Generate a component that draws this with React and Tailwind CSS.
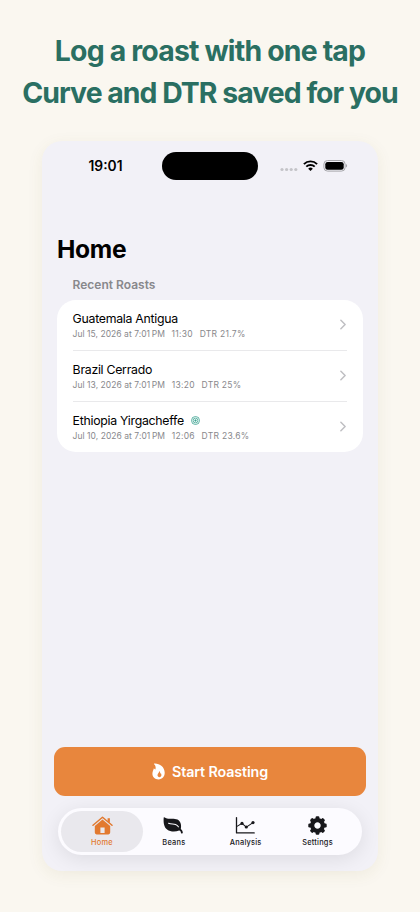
import React from 'react'

const roasts = [
  { name: 'Guatemala Antigua', date: 'Jul 15, 2026 at 7:01\u2009PM', time: '11:30', dtr: 'DTR 21.7%' },
  { name: 'Brazil Cerrado', date: 'Jul 13, 2026 at 7:01\u2009PM', time: '13:20', dtr: 'DTR 25%' },
  { name: 'Ethiopia Yirgacheffe', date: 'Jul 10, 2026 at 7:01\u2009PM', time: '12:06', dtr: 'DTR 23.6%', target: true },
]

const HomeIcon = () => (
  <svg width="21" height="19" viewBox="0 0 21 19" fill="none">
    <path d="M1 9.2 10.5 1.2 20 9.2" stroke="currentColor" strokeWidth="1.5" strokeLinecap="round" strokeLinejoin="round" />
    <path d="M15.6 2.2h2.3v4.9l-2.3-1.9z" fill="currentColor" />
    <path
      d="M10.5 3.5 18.2 9.9v6.7a1.8 1.8 0 0 1-1.8 1.8H4.6a1.8 1.8 0 0 1-1.8-1.8V9.9zM8.4 11.6v5.3h4.2v-5.3z"
      fill="currentColor"
      fillRule="evenodd"
    />
  </svg>
)

const LeafIcon = () => (
  <svg width="21" height="19" viewBox="0 0 21 19" fill="none">
    <path
      d="M.7 1.7C.3 6.600 1 11.200 4.100 13.500c3.200 2.500 8.200 2.600 12 1.100 1.300.2 1.700 1.300 1.900 2.300.3 1 1.800.8 1.800-.3-.1-1.600-.8-2.900-2-3.700.9-3.500-.1-7.500-3.300-9.300C10.400 1.500 5 3.900 1.600 1.500c-.4-.3-.800-.2-.9.2z"
      fill="currentColor"
    />
    <path d="M5.600 7.200c2.400 1.200 4.600.5 6.900 1.300 1.300.5 2.200 1.300 2.900 2.300" stroke="#fcfbff" strokeWidth="1.100" strokeLinecap="round" />
  </svg>
)

const ChartIcon = () => (
  <svg width="21" height="19" viewBox="0 0 21 19" fill="none" stroke="currentColor">
    <path d="M1.500 1.600v15.300h17.700" strokeWidth="1.300" strokeLinecap="round" strokeLinejoin="round" />
    <path d="M2 10.400 7 7.400l4.300 3.700 6.700-4.500" strokeWidth="1.100" />
    <g fill="currentColor" stroke="none">
      <circle cx="7" cy="7.400" r="1.600" />
      <circle cx="11.300" cy="11" r="1.600" />
      <circle cx="18" cy="6.600" r="1.600" />
    </g>
  </svg>
)

const GearIcon = () => (
  <svg width="21" height="19" viewBox="0 0 21 19" fill="none">
    <g transform="translate(10.5 9.5)">
      <circle r="5.3" stroke="currentColor" strokeWidth="4.2" />
      {[0, 45, 90, 135, 180, 225, 270, 315].map((angle) => (
        <rect key={angle} x="-1.9" y="-9.2" width="3.8" height="4" rx="1.2" fill="currentColor" transform={`rotate(${angle})`} />
      ))}
    </g>
  </svg>
)

const FlameIcon = () => (
  <svg width="13" height="17" viewBox="0 0 13 17" fill="white">
    <path
      fillRule="evenodd"
      d="M2.300.6C7.500.3 12.700 4 12.700 9.800c0 3.900-2.500 6.600-6.200 6.600C2.900 16.400.4 14 .4 10.800c0-2.400 1.100-3.900 1.500-5.600.3.500.8 1.100 1.500 1.300.6-2 .3-4-1.300-5.300-.2-.2-.1-.6.2-.6zM7.400 8c.1 1.500-1.900 2.400-1.900 4.300 0 1.100.8 1.900 1.900 1.900 1.200 0 2-.9 2-2.200 0-.8-.2-1.500-.6-2.100-.1.400-.3.700-.6.800.1-1.100-.1-2-.8-2.700z"
    />
  </svg>
)

const TargetIcon = () => (
  <svg width="9" height="9" viewBox="0 0 9 9" fill="none" stroke="#39a18f">
    <circle cx="4.5" cy="4.5" r="4" strokeWidth=".8" />
    <circle cx="4.5" cy="4.5" r="2.4" strokeWidth=".8" />
    <circle cx="4.5" cy="4.5" r=".9" fill="#39a18f" strokeWidth=".4" />
  </svg>
)

const tabs = [
  { label: 'Home', icon: HomeIcon, active: true },
  { label: 'Beans', icon: LeafIcon },
  { label: 'Analysis', icon: ChartIcon },
  { label: 'Settings', icon: GearIcon },
]

const StatusBar = () => (
  <div className="flex h-[28px] items-center">
    <div className="w-[120px] pt-px pl-[46.5px] text-[13.8px] leading-none font-semibold text-black">19:01</div>
    <div className="h-[28px] w-[96px] rounded-full bg-black" />
    <div className="ml-[22px] flex items-center">
      <svg width="18" height="14" viewBox="0 0 18 14" fill="#c4c4c8">
        <circle cx="2" cy="10.5" r="1.6" />
        <circle cx="6.6" cy="10.5" r="1.6" />
        <circle cx="11.2" cy="10.5" r="1.6" />
        <circle cx="15.8" cy="10.5" r="1.6" />
      </svg>
      <svg className="ml-[5px]" width="15" height="12" viewBox="0 0 15 12" fill="none" stroke="black" strokeWidth="1.9">
        <path d="M.9 4.1a9.4 9.4 0 0 1 13.2 0" />
        <path d="M3.3 6.7a5.9 5.9 0 0 1 8.4 0" />
        <path d="M7.5 11 5.200 8.700a3.200 3.200 0 0 1 4.600 0z" fill="black" stroke="none" />
      </svg>
      <svg className="ml-[5px]" width="25" height="12" viewBox="0 0 25 12">
        <rect x=".9" y=".5" width="21.2" height="10.6" rx="3.6" fill="none" stroke="#a6a6aa" strokeWidth="1" />
        <rect x="2.3" y="1.9" width="18.4" height="7.8" rx="2.3" fill="black" />
        <path d="M23 4.100c1.500.5 1.500 2.900 0 3.400z" fill="#a6a6aa" />
      </svg>
    </div>
  </div>
)

const RoastRow = ({ roast, last }) => (
  <div className={last ? 'flex h-[50px] items-center justify-between' : 'flex h-[51px] items-center justify-between border-b border-[#e9e9eb]'}>
    <div className="-ml-[0.4px] pt-px">
      <div className="flex h-[17px] items-center gap-[7px]">
        <span className="text-[12.3px] leading-[17px] tracking-[-0.27px] text-black">{roast.name}</span>
        {roast.target && <TargetIcon />}
      </div>
      <div className="flex gap-[6.7px] text-[8.5px] leading-[14px] tracking-[0.28px] whitespace-nowrap text-[#88888c]">
        <span className="tracking-[0.04px]">{roast.date}</span>
        <span>{roast.time}</span>
        <span>{roast.dtr}</span>
      </div>
    </div>
    <svg className="mr-px -mt-px" width="6" height="11" viewBox="0 0 6 11" fill="none" stroke="#bfbfc3" strokeWidth="1.5" strokeLinecap="round" strokeLinejoin="round">
      <path d="M.9 1.300 5.100 5.500.9 9.700" />
    </svg>
  </div>
)

const TabBar = () => (
  <div className="mx-auto mt-[12px] flex h-[47px] w-[304px] rounded-full bg-[#fcfbff] p-[3px] shadow-[0_4px_20px_rgba(0,0,0,0.09)]">
    {tabs.map(({ label, icon: Icon, active }) => (
      <button
        key={label}
        type="button"
        className={
          active
            ? '-mr-[5px] flex w-[82px] flex-col items-center rounded-full bg-[#e9e8ed] pt-[5px] text-[#e2792f]'
            : 'flex w-[71.800px] flex-col items-center pt-[5px] text-[#17171b]'
        }
      >
        <Icon />
        <span className="mt-[2.5px] text-[7.4px] leading-[10px] font-medium tracking-[0.24px]">{label}</span>
      </button>
    ))}
  </div>
)

const App = () => (
  <div className="h-[912px] w-[420px] overflow-hidden bg-[#faf7f0] font-['Inter',sans-serif]">
    <h1 className="pt-[30px] text-center text-[28.4px] leading-[42px] font-bold whitespace-nowrap text-[#2a6f62]">
      <span className="block tracking-[-0.81px]">Log a roast with one tap</span>
      <span className="block tracking-[-0.97px]">Curve and DTR saved for you</span>
    </h1>
    <div className="mx-auto mt-[27px] flex h-[730px] w-[336px] flex-col rounded-[20px] bg-[#f2f1f7] pt-[11px] shadow-[0_4px_16px_rgba(120,100,40,0.08)]">
      <StatusBar />
      <h2 className="mt-[53px] ml-[15px] text-[24.6px] leading-[32px] font-bold tracking-[-0.3px] text-black">Home</h2>
      <p className="mt-[12px] ml-[30.6px] text-[12px] leading-[16px] font-semibold text-[#88888c]">Recent Roasts</p>
      <div className="mx-[15px] mt-[7px] h-[152px] rounded-[19px] bg-white px-[16px]">
        {roasts.map((roast, index) => (
          <RoastRow key={roast.name} roast={roast} last={index === roasts.length - 1} />
        ))}
      </div>
      <button
        type="button"
        className="mx-[12px] mt-auto flex h-[49px] shrink-0 items-center justify-center gap-[7px] rounded-[11px] bg-[#e8863d] text-[14.3px] font-semibold tracking-[-0.12px] text-white"
      >
        <FlameIcon />
        Start Roasting
      </button>
      <div className="mb-[16px]">
        <TabBar />
      </div>
    </div>
  </div>
)

export default App
